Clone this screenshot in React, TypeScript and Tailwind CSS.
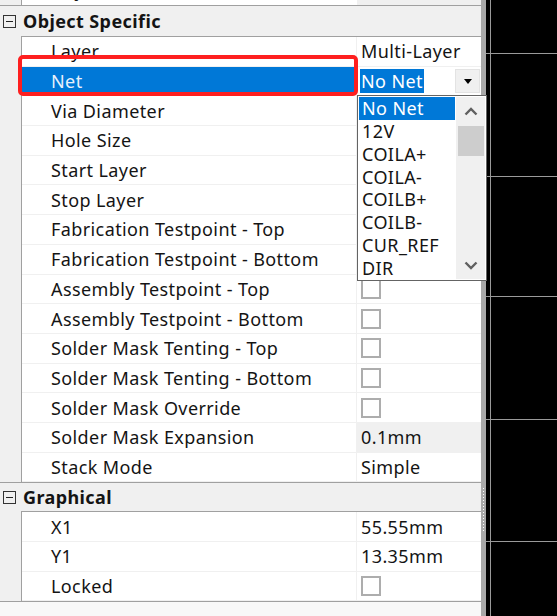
import type { ReactNode } from 'react';

type Prop = {
  name: string;
  value?: string;
  check?: boolean;
  readOnly?: boolean;
  combo?: boolean;
};

// values under the open net list are left empty
const objectProps: Prop[] = [
  { name: 'Layer', value: 'Multi-Layer' },
  { name: 'Net', combo: true },
  { name: 'Via Diameter' },
  { name: 'Hole Size' },
  { name: 'Start Layer' },
  { name: 'Stop Layer' },
  { name: 'Fabrication Testpoint - Top' },
  { name: 'Fabrication Testpoint - Bottom' },
  { name: 'Assembly Testpoint - Top', check: true },
  { name: 'Assembly Testpoint - Bottom', check: true },
  { name: 'Solder Mask Tenting - Top', check: true },
  { name: 'Solder Mask Tenting - Bottom', check: true },
  { name: 'Solder Mask Override', check: true },
  { name: 'Solder Mask Expansion', value: '0.1mm', readOnly: true },
  { name: 'Stack Mode', value: 'Simple' },
];

const graphicalProps: Prop[] = [
  { name: 'X1', value: '55.55mm' },
  { name: 'Y1', value: '13.35mm' },
  { name: 'Locked', check: true },
];

const nets = ['No Net', '12V', 'COILA+', 'COILA-', 'COILB+', 'COILB-', 'CUR_REF', 'DIR'];

function Checkbox() {
  return <div className="h-5 w-5 border-2 border-[#adadad] bg-white" />;
}

function Combo() {
  return (
    <div className="flex h-full w-full items-center pl-[3px] pr-px">
      <span className="flex h-6 items-center bg-[#0078d7] px-px text-white">No Net</span>
      <div className="ml-auto flex h-6 w-[25px] items-center justify-center border border-[#e3e3e3] bg-[#f0f0f0]">
        <div className="h-0 w-0 border-x-[4.5px] border-t-[5px] border-x-transparent border-t-black" />
      </div>
    </div>
  );
}

function Row({ prop, selected }: { prop: Prop; selected?: boolean }) {
  let value: ReactNode = prop.value;
  if (prop.check) value = <Checkbox />;
  if (prop.combo) value = <Combo />;

  return (
    <div className="flex h-[29.7px] border-b border-[#f0f0f0]">
      <div
        className={`flex flex-1 items-center border-r border-[#f0f0f0] pl-[29px] ${
          selected ? 'bg-[#0078d7] text-[#e8f1fb]' : 'bg-white'
        }`}
      >
        {prop.name}
      </div>
      <div
        className={`flex w-[124px] items-center ${prop.combo ? '' : 'pl-1'} ${
          prop.readOnly ? 'bg-[#f0f0f0]' : 'bg-white'
        }`}
      >
        {value}
      </div>
    </div>
  );
}

function Group({ title, props, headerHeight }: { title: string; props: Prop[]; headerHeight: string }) {
  return (
    <>
      <div className={`flex items-center gap-[7px] pl-[3px] font-bold ${headerHeight}`}>
        <div className="flex h-[13px] w-[13px] items-center justify-center border border-[#333]">
          <div className="h-px w-[7px] bg-[#222]" />
        </div>
        <span>{title}</span>
      </div>
      <div className="ml-[21px] border-l border-t border-[#a0a0a0]">
        {props.map((p) => (
          <Row key={p.name} prop={p} selected={p.name === 'Net'} />
        ))}
      </div>
      <div className="h-px bg-[#a0a0a0]" />
    </>
  );
}

function Chevron({ up }: { up?: boolean }) {
  return (
    <svg width="14" height="9" viewBox="0 0 14 9">
      <polyline
        points={up ? '1.5,7.5 7,2 12.5,7.5' : '1.5,1.5 7,7 12.5,1.5'}
        fill="none"
        stroke="#606060"
        strokeWidth="2.4"
      />
    </svg>
  );
}

function NetList() {
  return (
    <div className="absolute left-[357px] top-[95px] z-10 flex h-[186px] w-[130px] border border-[#646464] bg-white p-px">
      <div className="flex w-[96px] flex-col">
        {nets.map((n, i) => (
          <div
            key={n}
            className={`flex h-[23px] items-center pl-[3px] ${i === 0 ? 'bg-[#0078d7] text-white' : ''}`}
          >
            {n}
          </div>
        ))}
      </div>
      <div className="ml-px flex flex-1 flex-col items-center bg-[#f0f0f0]">
        <div className="flex h-[29px] items-center">
          <Chevron up />
        </div>
        <div className="h-[30px] w-[26px] bg-[#cdcdcd]" />
        <div className="mt-auto flex h-[27px] items-center">
          <Chevron />
        </div>
      </div>
    </div>
  );
}

function Canvas() {
  const rows = [53, 176, 296, 419, 541];
  return (
    <div className="flex-1 bg-black">
      <svg className="block h-full w-full" viewBox="0 0 71 616" preserveAspectRatio="none">
        <line x1="4.5" y1="0" x2="4.5" y2="616" stroke="#9a9a9a" strokeWidth="1" />
        {rows.map((y) => (
          <line key={y} x1="0" y1={y + 0.5} x2="71" y2={y + 0.5} stroke="#9a9a9a" strokeWidth="1" />
        ))}
      </svg>
    </div>
  );
}

export default function App() {
  return (
    <div className="flex h-[616px] w-[557px] overflow-hidden bg-white font-['Noto_Sans',sans-serif] text-[18px] leading-none tracking-[0.4px] text-[#141414]">
      <div className="relative flex w-[481px] flex-col bg-[#f0f0f0]">
        {/* tail of the previous group */}
        <div className="ml-[21px] flex h-[5px] items-end overflow-hidden border-l border-[#a0a0a0]">
          <div className="flex h-[29.7px] w-full shrink-0">
            <div className="flex flex-1 items-center bg-white pl-[29px]">Any</div>
            <div className="w-[124px] bg-[#f0f0f0]" />
          </div>
        </div>
        <div className="h-px bg-[#a0a0a0]" />

        <Group title="Object Specific" props={objectProps} headerHeight="h-[30px]" />
        <Group title="Graphical" props={graphicalProps} headerHeight="h-[28px]" />
        <div className="flex-1 bg-[#f8f8f8]" />

        <NetList />
        {/* red annotation box */}
        <div className="pointer-events-none absolute left-[18px] top-[55px] z-20 h-[41px] w-[340px] rounded-[5px] border-4 border-[#fe1f1f]" />
      </div>

      {/* splitter */}
      <div className="flex w-[5px] flex-col items-center bg-[#a8a8a8] pt-[488px]">
        {Array.from({ length: 15 }).map((_, i) => (
          <div key={i} className="mb-[2px] h-px w-px bg-white" />
        ))}
      </div>

      <Canvas />
    </div>
  );
}
